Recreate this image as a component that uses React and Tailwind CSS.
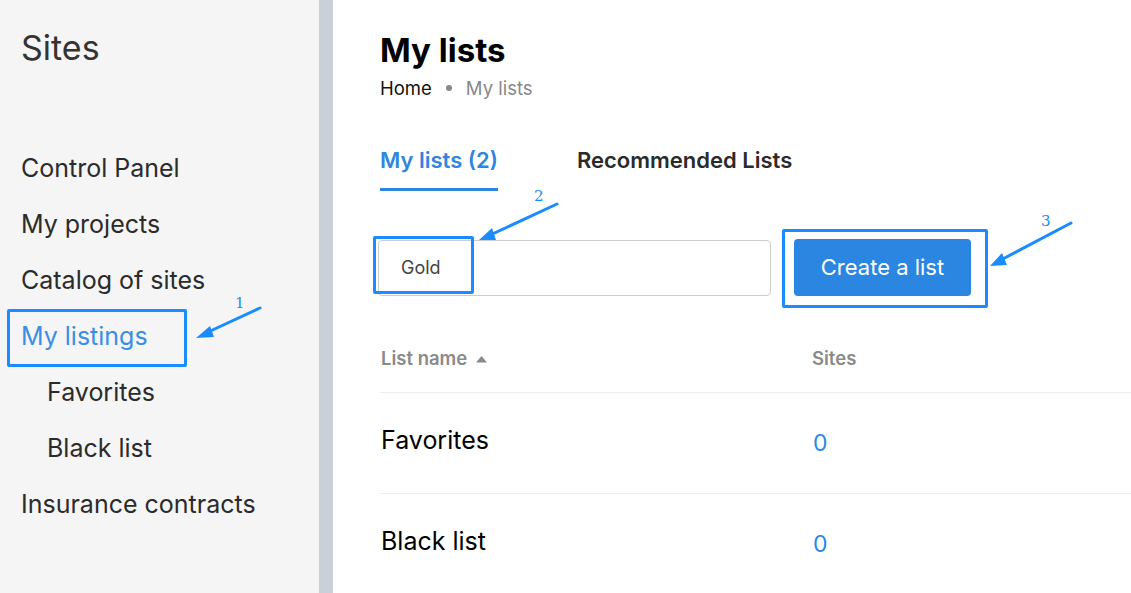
export default function App() {
  const nav = [
    { label: "Control Panel" },
    { label: "My projects" },
    { label: "Catalog of sites" },
    { label: "My listings", active: true },
    { label: "Favorites", sub: true },
    { label: "Black list", sub: true },
    { label: "Insurance contracts" },
  ];
  return (
    <div className="relative flex h-[593px] w-[1131px] overflow-hidden bg-white" style={{ fontFamily: "Inter, 'Noto Sans', sans-serif" }}>
      <aside className="w-[319px] shrink-0 bg-[#f5f5f5] pl-[21px] pt-[27px]">
        <div className="text-[34px] leading-[42px] text-[#333]">Sites</div>
        <nav className="mt-[72px] flex flex-col">
          {nav.map((n) => (
            <div
              key={n.label}
              className={
                "flex h-[56px] items-center text-[25px] " +
                (n.sub ? "pl-[26px] " : "") +
                (n.active ? "text-[#3a8ee6]" : "text-[#2b2b2b]")
              }
            >
              {n.label}
            </div>
          ))}
        </nav>
      </aside>
      <div className="w-[14px] shrink-0 bg-[#c9d0d8]" />
      <main className="flex-1 pl-[47px] pt-[30px]">
        <h1 className="text-[33px] font-bold leading-[40px] text-black">My lists</h1>
        <div className="mt-[6px] flex items-center text-[18.5px] leading-[24px]">
          <span className="text-[#111]">Home</span>
          <span className="mx-[14px] h-[6px] w-[6px] rounded-full bg-[#888]" />
          <span className="text-[#888]">My lists</span>
        </div>
        <div className="mt-[46px] flex gap-[79px]">
          <div className="border-b-[3px] border-[#2f86de] pb-[14px] text-[22px] font-semibold leading-[28px] text-[#2f86de]">
            My lists (2)
          </div>
          <div className="pb-[14px] text-[22px] font-semibold leading-[28px] text-[#2b2b2b]">
            Recommended Lists
          </div>
        </div>
        <div className="mt-[48px] flex items-center gap-[23px]">
          <div className="-ml-[2px] flex h-[56px] w-[393px] items-center rounded-[4px] border border-[#cccccc] pl-[22px] text-[18px] text-[#444]">
            Gold
          </div>
          <button className="h-[57px] w-[177px] rounded-[4px] bg-[#2a86e0] text-[22px] text-white">
            Create a list
          </button>
        </div>
        <div className="mt-[30px]">
          <div className="flex h-[67px] items-center border-b border-[#ececec] text-[18.5px] font-semibold text-[#8a8a8a]">
            <div className="flex w-[432px] items-center gap-[9px] pl-[1px]">
              List name
              <svg width="11" height="7" viewBox="0 0 11 7"><path d="M5.5 0L11 6.5H0z" fill="#8a8a8a" /></svg>
            </div>
            <div>Sites</div>
          </div>
          {["Favorites", "Black list"].map((r) => (
            <div key={r} className="flex h-[101px] items-center border-b border-[#ececec]">
              <div className="w-[432px] pb-[4px] pl-[1px] text-[25px] text-black">{r}</div>
              <div className="pl-[1px] text-[23px] text-[#2b87e3]">0</div>
            </div>
          ))}
        </div>
      </main>

      {/* Annotations overlay */}
      <div className="pointer-events-none absolute left-[7px] top-[309px] h-[58px] w-[180px] rounded-[2px] border-[3px] border-[#1a8cff]" />
      <div className="pointer-events-none absolute left-[373px] top-[236px] h-[58px] w-[101px] rounded-[2px] border-[3px] border-[#1a8cff]" />
      <div className="pointer-events-none absolute left-[782px] top-[229px] h-[79px] w-[206px] rounded-[2px] border-[3px] border-[#1a8cff]" />
      <svg className="pointer-events-none absolute left-0 top-0" width="1131" height="593">
        <g stroke="#1a8cff" strokeWidth="3" strokeLinecap="round" fill="none">
          <line x1="260" y1="308" x2="206" y2="333" />
          <line x1="557" y1="204" x2="488" y2="236" />
          <line x1="1071" y1="223" x2="999" y2="261" />
        </g>
        <g fill="#1a8cff">
          <polygon points="196,338 210,326 214,337" />
          <polygon points="479,240 492,228 496,240" />
          <polygon points="990,266 1002,253 1007,265" />
        </g>
        <g fill="#1a8cff" fontFamily="'DejaVu Serif', serif" fontSize="15">
          <text x="235" y="308">1</text>
          <text x="534" y="201">2</text>
          <text x="1041" y="226">3</text>
        </g>
      </svg>
    </div>
  );
}
